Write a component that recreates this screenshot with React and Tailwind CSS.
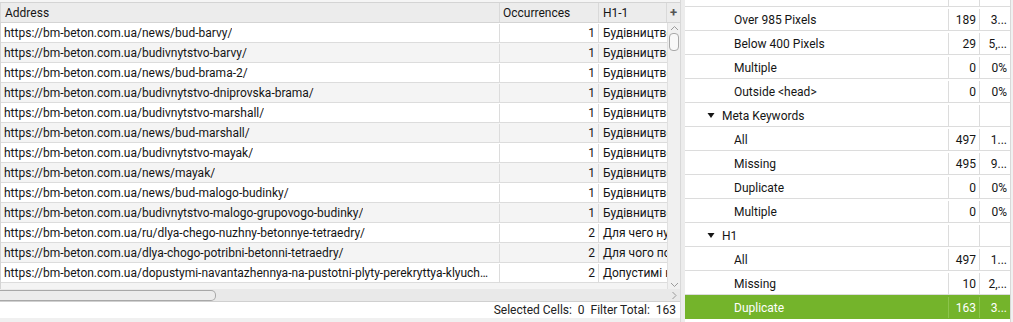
import { useState } from 'react';

const urls = [
  ['https://bm-beton.com.ua/news/bud-barvy/', 1, 'Будівництво барви'],
  ['https://bm-beton.com.ua/budivnytstvo-barvy/', 1, 'Будівництво барви'],
  ['https://bm-beton.com.ua/news/bud-brama-2/', 1, 'Будівництво брама'],
  ['https://bm-beton.com.ua/budivnytstvo-dniprovska-brama/', 1, 'Будівництво брама'],
  ['https://bm-beton.com.ua/budivnytstvo-marshall/', 1, 'Будівництво маршал'],
  ['https://bm-beton.com.ua/news/bud-marshall/', 1, 'Будівництво маршал'],
  ['https://bm-beton.com.ua/budivnytstvo-mayak/', 1, 'Будівництво маяк'],
  ['https://bm-beton.com.ua/news/mayak/', 1, 'Будівництво маяк'],
  ['https://bm-beton.com.ua/news/bud-malogo-budinky/', 1, 'Будівництво малого'],
  ['https://bm-beton.com.ua/budivnytstvo-malogo-grupovogo-budinky/', 1, 'Будівництво малого'],
  ['https://bm-beton.com.ua/ru/dlya-chego-nuzhny-betonnye-tetraedry/', 2, 'Для чего нужны'],
  ['https://bm-beton.com.ua/dlya-chogo-potribni-betonni-tetraedry/', 2, 'Для чого потрібні'],
  ['https://bm-beton.com.ua/dopustymi-navantazhennya-na-pustotni-plyty-perekryttya-klyuchovi-faktory/', 2, 'Допустимі навантаження'],
];

const overview = [
  { label: 'Over 985 Pixels', count: '189', pct: '3...', level: 2 },
  { label: 'Below 400 Pixels', count: '29', pct: '5,...', level: 2 },
  { label: 'Multiple', count: '0', pct: '0%', level: 2 },
  { label: 'Outside <head>', count: '0', pct: '0%', level: 2 },
  { label: 'Meta Keywords', level: 1 },
  { label: 'All', count: '497', pct: '1...', level: 2 },
  { label: 'Missing', count: '495', pct: '9...', level: 2 },
  { label: 'Duplicate', count: '0', pct: '0%', level: 2 },
  { label: 'Multiple', count: '0', pct: '0%', level: 2 },
  { label: 'H1', level: 1 },
  { label: 'All', count: '497', pct: '1...', level: 2 },
  { label: 'Missing', count: '10', pct: '2,...', level: 2 },
  { label: 'Duplicate', count: '163', pct: '3...', level: 2 },
];

const font = { fontFamily: 'Roboto, "Liberation Sans", sans-serif' };

const App = () => {
  const [selected, setSelected] = useState(12);

  return (
    <div className="flex w-[1013px] h-[322px] overflow-hidden bg-[#f0f0f0] text-[12px] text-[#151515]" style={font}>
      {/* Results table */}
      <div className="w-[680px] flex flex-col">
        <div className="h-[2px] bg-[#f5f5f5]"></div>
        <div className="flex h-[21px] bg-[#ececec] border-t border-b border-[#d4d4d4]">
          <div className="w-[500px] pl-[4px] flex items-center border-r border-[#d9d9d9] border-l">Address</div>
          <div className="w-[99px] pl-[3px] flex items-center border-r border-[#d9d9d9]">Occurrences</div>
          <div className="w-[68px] pl-[4px] flex items-center border-r border-[#d9d9d9]">H1-1</div>
          <div className="w-[13px] flex items-center justify-center text-[13px] font-bold text-[#555]">+</div>
        </div>
        <div className="flex h-[266px]">
          <div className="w-[667px] overflow-hidden border-l border-[#d4d4d4]">
            {urls.map(([url, count, h1], i) => (
              <div
                key={i}
                className={`flex h-[20px] pt-[1px] border-b border-[#dcdcdc] ${i % 2 === 0 ? 'bg-white' : 'bg-[#f4f4f4]'}`}
              >
                <div className="w-[499px] pl-[3px] pr-[6px] flex items-center border-r border-[#dcdcdc] overflow-hidden">
                  <span className="truncate">{url}</span>
                </div>
                <div className="w-[99px] pr-[3px] flex items-center justify-end border-r border-[#dcdcdc]">{count}</div>
                <div className="w-[68px] pl-[4px] flex items-center overflow-hidden whitespace-nowrap">{h1}</div>
              </div>
            ))}
            <div className="h-[6px] bg-[#f4f4f4]"></div>
          </div>
          <div className="w-[13px] flex flex-col items-center bg-[#f0f0f0] border-l border-[#e0e0e0]">
            <svg width="9" height="6" viewBox="0 0 9 6" className="mt-[2px]">
              <path d="M1 5 L4.5 1.5 L8 5" fill="none" stroke="#9a9a9a" strokeWidth="1" />
            </svg>
            <div className="mt-[2px] w-[10px] h-[18px] rounded-[4px] border border-[#a8a8a8] bg-[#f8f8f8]"></div>
            <div className="flex-1"></div>
            <svg width="9" height="6" viewBox="0 0 9 6" className="mb-[1px]">
              <path d="M1 1 L4.5 4.5 L8 1" fill="none" stroke="#9a9a9a" strokeWidth="1" />
            </svg>
          </div>
        </div>
        <div className="flex h-[13px] bg-[#e9e9e9] border-b border-[#d0d0d0]">
          <div className="flex-1 flex items-center">
            <div className="w-[216px] h-[11px] rounded-r-[5px] border border-l-0 border-[#a8a8a8] bg-[#ececec]"></div>
          </div>
          <div className="w-[13px] flex items-center justify-center">
            <svg width="6" height="9" viewBox="0 0 6 9">
              <path d="M1.5 1 L5 4.5 L1.5 8" fill="none" stroke="#9a9a9a" strokeWidth="1" />
            </svg>
          </div>
        </div>
        <div className="h-[16px] bg-white flex items-center justify-end pr-[4px] text-[#222]">
          Selected Cells:&nbsp; 0&nbsp; Filter Total:&nbsp; 163
        </div>
        <div className="flex-1 bg-[#f0f0f0]"></div>
      </div>

      {/* Overview tree */}
      <div className="flex-1 flex bg-white">
        <div className="w-[5px] bg-[#ececec] border-l border-[#d8d8d8]"></div>
        <div className="w-[325px] flex flex-col">
          <div className="flex h-[7px] border-b border-[#dcdcdc]">
            <div className="w-[264px] border-r border-[#dcdcdc]"></div>
            <div className="w-[31px] border-r border-[#dcdcdc]"></div>
            <div className="flex-1"></div>
          </div>
          {overview.map((row, i) => {
            const isSel = i === selected;
            return (
              <div
                key={i}
                onClick={() => row.level === 2 && setSelected(i)}
                className={`flex h-[24px] pt-[2px] border-b ${isSel ? 'bg-[#74b42b] text-white border-[#74b42b]' : 'border-[#dcdcdc]'}`}
              >
                <div className={`w-[264px] flex items-center border-r ${isSel ? 'border-[#8cc44c]' : 'border-[#dcdcdc]'}`}>
                  {row.level === 1 ? (
                    <>
                      <svg width="8" height="7" viewBox="0 0 8 7" className="ml-[22px] mr-[7px]">
                        <path d="M0.5 1 L7.5 1 L4 6 Z" fill="#151515" />
                      </svg>
                      <span>{row.label}</span>
                    </>
                  ) : (
                    <span className="ml-[49px]">{row.label}</span>
                  )}
                </div>
                <div className={`w-[31px] flex items-center justify-end pr-[3px] border-r ${isSel ? 'border-[#8cc44c]' : 'border-[#dcdcdc]'}`}>
                  {row.count}
                </div>
                <div className="flex-1 flex items-center justify-end pr-[3px]">{row.pct}</div>
              </div>
            );
          })}
          <div className="flex-1"></div>
        </div>
        <div className="flex-1 bg-[#f0f0f0] border-l border-[#d8d8d8]"></div>
      </div>
    </div>
  );
};

export default App;
